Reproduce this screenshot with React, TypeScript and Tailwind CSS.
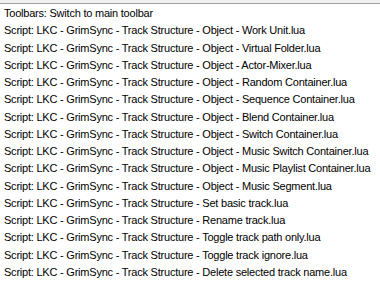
const prefix = "Script: LKC - GrimSync - Track Structure - ";

const rows = [
  "Toolbars: Switch to main toolbar",
  prefix + "Object - Work Unit.lua",
  prefix + "Object - Virtual Folder.lua",
  prefix + "Object - Actor-Mixer.lua",
  prefix + "Object - Random Container.lua",
  prefix + "Object - Sequence Container.lua",
  prefix + "Object - Blend Container.lua",
  prefix + "Object - Switch Container.lua",
  prefix + "Object - Music Switch Container.lua",
  prefix + "Object - Music Playlist Container.lua",
  prefix + "Object - Music Segment.lua",
  prefix + "Set basic track.lua",
  prefix + "Rename track.lua",
  prefix + "Toggle track path only.lua",
  prefix + "Toggle track ignore.lua",
  prefix + "Delete selected track name.lua",
];

export default function App() {
  return (
    <div className="w-[380px] h-[284px] overflow-hidden bg-[#f0f0f0] pt-[3px]">
      <div className="h-full bg-white border-t border-[#a0a0a0] pt-[1px]">
        <ul className="flex flex-col">
          {rows.map((r, i) => (
            <li
              key={i}
              className="h-[17.25px] pl-[4px] whitespace-nowrap text-[11px] leading-[17.25px] tracking-[-0.22px] text-black"
              style={{ fontFamily: '"Liberation Sans", Arial, sans-serif' }}
            >
              {r}
            </li>
          ))}
        </ul>
      </div>
    </div>
  );
}
